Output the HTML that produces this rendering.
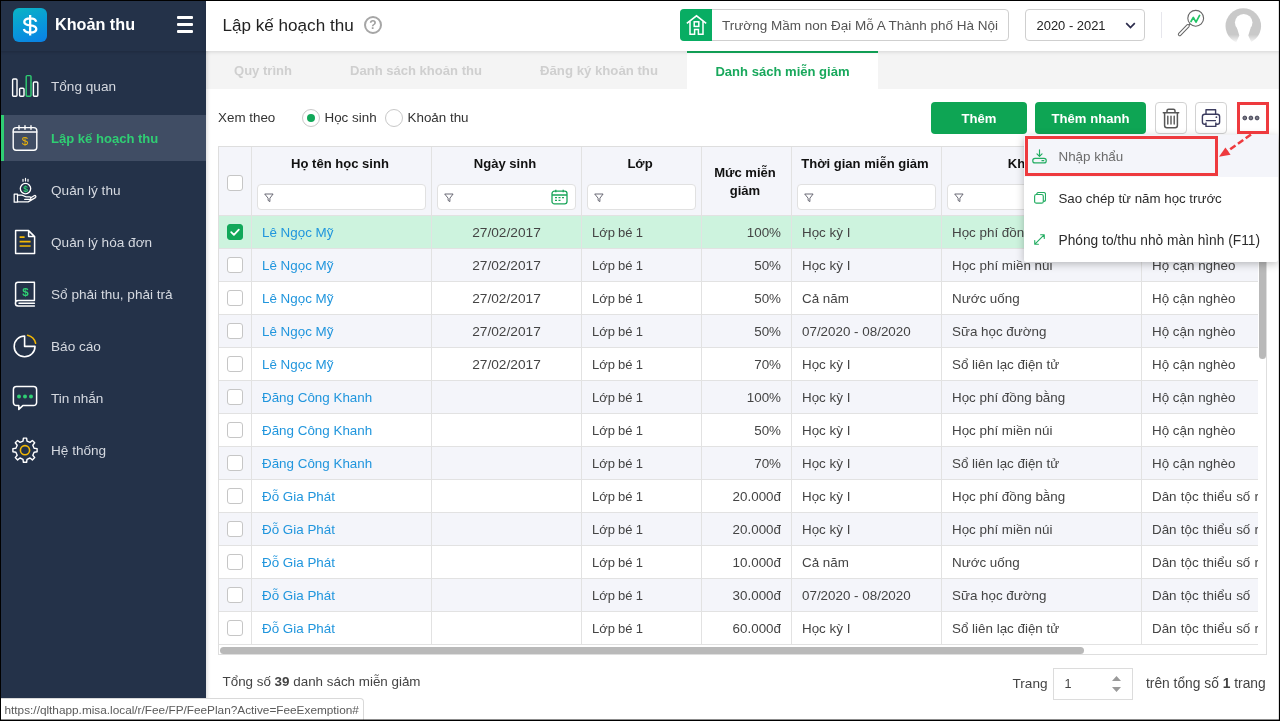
<!DOCTYPE html>
<html lang="vi">
<head>
<meta charset="utf-8">
<title>Lập kế hoạch thu</title>
<style>
*{box-sizing:border-box;margin:0;padding:0}
html,body{width:1280px;height:721px;overflow:hidden;background:#fff}
body{font-family:"Liberation Sans",sans-serif;font-size:13.4px;color:#333;position:relative;will-change:transform}
.abs{position:absolute}
.nw{white-space:nowrap}
/* frame */
#frame{position:absolute;left:0;top:0;width:1280px;height:721px;border-style:solid;border-color:#000;border-width:1px;box-shadow:inset 0 -1px 0 rgba(0,0,0,.45),inset -1px 0 0 rgba(0,0,0,.12);z-index:100;pointer-events:none}
/* sidebar */
#side{position:absolute;left:0;top:0;width:206px;height:721px;background:#243249;box-shadow:1px 0 4px rgba(0,0,0,.16);z-index:4}
#side .hd{position:absolute;left:0;top:0;width:206px;height:51px;box-shadow:0 1px 3px rgba(0,0,0,.18)}
#logo{position:absolute;left:13px;top:8px;width:34px;height:34px;border-radius:6px;background:linear-gradient(160deg,#0bb5c4 0%,#089ad8 50%,#0a7fe6 100%)}
#appname{position:absolute;left:55px;top:14px;font-size:16.2px;font-weight:700;color:#fff;line-height:20px}
#burger{position:absolute;left:177px;top:16px;width:16px;height:17px}
#burger i{position:absolute;left:0;width:16px;height:2.600px;background:#fff;border-radius:1px}
.mi{position:absolute;left:0;width:206px;height:46px;color:#d5d9e0;font-size:13.6px}
.mi span{position:absolute;left:51px;top:15px;line-height:18px;white-space:nowrap}
.mi svg{position:absolute;left:10px;top:8px}
.mi.act{background:#404d64;color:#2fce73;font-weight:700;font-size:13.05px}
.mi.act:before{content:"";position:absolute;left:1px;top:0;width:3px;height:46px;background:#2fce73}
/* top bar */
#top{position:absolute;left:206px;top:0;width:1074px;height:51px;background:#fff;box-shadow:0 1px 4px rgba(0,0,0,.13);z-index:5}
#ptitle{position:absolute;left:16.5px;top:15px;font-size:17.1px;line-height:22px;color:#222;white-space:nowrap}
#help{position:absolute;left:158px;top:16px;width:18px;height:18px;border:2px solid #a6a6a6;border-radius:50%;color:#a0a0a0;font-size:12px;font-weight:700;line-height:14px;text-align:center}
#school{position:absolute;left:474px;top:9px;width:329px;height:32px;border:1px solid #cfcfcf;border-radius:4px;background:#fff}
#school .g{position:absolute;left:-1px;top:-1px;width:31.500px;height:32px;background:#08ad63;border-radius:4px 0 0 4px}
#school .t{position:absolute;left:41px;top:7px;line-height:18px;font-size:13.5px;color:#555;white-space:nowrap}
#year{position:absolute;left:819px;top:9px;width:120px;height:32px;border:1px solid #cfcfcf;border-radius:4px}
#year .t{position:absolute;left:10.5px;top:7px;line-height:18px;font-size:12.95px;color:#222;white-space:nowrap}
#vdiv{position:absolute;left:955px;top:12px;width:1px;height:26px;background:#e6e6ec}
/* tabs */
#tabs{position:absolute;left:206px;top:51px;width:1074px;height:38px;background:#f4f4f4}
.tab{position:absolute;top:0;height:38px;line-height:40px;font-weight:700;font-size:13.05px;color:#cfcfcf;white-space:nowrap}
.tab.on{background:#fff;color:#19a85c;border-top:2px solid #12a85a;line-height:37px;text-align:center}
/* toolbar */
.radio{position:absolute;top:109px;width:18px;height:18px;border:1px solid #c8c8c8;border-radius:50%;background:#fff}
.radio.on:after{content:"";position:absolute;left:4px;top:4px;width:8px;height:8px;border-radius:50%;background:#12a85a}
.btn{position:absolute;top:102px;height:32px;border-radius:4px;background:#0ea554;color:#fff;font-weight:700;font-size:13.1px;line-height:34px;text-align:center}
.ibtn{position:absolute;top:102px;width:32px;height:32px;border:1px solid #d2d2d2;border-radius:4px;background:#fff}
/* grid */
#grid{position:absolute;left:218px;top:146px;width:1049px;height:509px;border:1px solid #dedede;overflow:hidden;background:#fff}
#gin{position:absolute;left:0;top:0;width:1039px;height:499px;overflow:hidden}
table{border-collapse:separate;border-spacing:0;table-layout:fixed;width:1300px}
th,td{border-right:1px solid #e2e2e2;border-bottom:1px solid #e2e2e2;overflow:hidden;white-space:nowrap}
th{background:#f4f5fa;height:69px;font-weight:700;font-size:13.05px;color:#111;vertical-align:top;position:relative}
td{height:33px;padding:0 10px;color:#444;font-size:13.4px}
tr.alt td{background:#f4f5fa}
tr.sel td{background:#cdf3de}
td.c{text-align:center;font-size:13.700px}
td.l{font-size:13px;word-spacing:-.5px}
td.w{word-spacing:.5px}
td.r{text-align:right}
td a{color:#2196dd;text-decoration:none}
.cb{display:block;width:16px;height:16px;border:1px solid #c6c6c6;border-radius:3px;background:#fff;margin:0 auto}
td.k{padding:0}
.cb.on{background:#12a85a;border-color:#12a85a;position:relative}
.ht{position:absolute;left:0;right:3px;top:8px;line-height:18px;text-align:center}
.fi{position:absolute;left:5px;right:5px;top:37px;height:26px;border:1px solid #e1e1e1;border-radius:4px;background:#fff}
.fi svg{position:absolute;left:5.500px;top:7.500px}
/* dropdown */
#menu{position:absolute;left:1024px;top:134.500px;width:253.500px;height:127px;background:#fff;border-radius:2px;box-shadow:0 2px 9px rgba(0,0,0,.26);z-index:20}
#menu .it{position:absolute;left:0;width:253.500px;height:42px;line-height:42px;font-size:13.4px;color:#2b2b2b;white-space:nowrap}
#menu .it span{position:absolute;left:34.500px;top:1px}
#menu .it svg{position:absolute;left:9px;top:12px}
.red{position:absolute;border:3px solid #ee3a3e;z-index:30}
/* footer */
#status{position:absolute;left:0;top:698px;width:364px;height:22px;background:#fff;border:1px solid #d9d9d9;border-left:none;border-bottom:none;border-radius:0 4px 0 0;font-size:11.8px;line-height:22px;color:#5a5a5a;padding-left:4.500px;white-space:nowrap;z-index:50}
</style>
</head>
<body>
<!-- SIDEBAR -->
<div id="side">
  <div class="hd"></div>
  <div id="logo"><svg width="34" height="34" viewBox="0 0 34 34"><path d="M23.200 13.700C22.700 11.400 20.600 10.300 17.200 10.300C13.600 10.300 11.300 11.700 11.300 14C11.300 16.400 13.400 17 17.200 17.400C21 17.800 23.300 18.600 23.300 21C23.300 23.300 20.800 24.600 17.200 24.600C13.600 24.600 11.400 23.400 10.900 21.100M17.150 7V27.500" fill="none" stroke="#fff" stroke-width="2.300"/></svg></div>
  <div id="appname">Khoản thu</div>
  <div id="burger"><i style="top:0"></i><i style="top:7px"></i><i style="top:14px"></i></div>
<svg class="abs" style="left:0;top:0;z-index:2" width="60" height="721" viewBox="0 0 60 721" fill="none" stroke="#fff" stroke-width="1.4" stroke-linejoin="round" stroke-linecap="round">
    <rect x="12.6" y="79" width="4.4" height="17.2" rx="1"/><rect x="19.6" y="88.2" width="4.4" height="8" rx="1"/><rect x="26.2" y="75.6" width="4.8" height="20.6" rx="1" stroke="#2fce73"/><rect x="33.4" y="82" width="4.4" height="14.2" rx="1"/>
    <rect x="13.2" y="127.6" width="23.6" height="22.6" rx="3"/><path d="M13.2 132h23.6M19 125.6v3.6M25 125.6v3.6M31 125.6v3.6"/>
    <text x="25" y="145.200" text-anchor="middle" font-family="Liberation Sans, sans-serif" font-size="11.5" font-weight="400" fill="#f2b705" stroke="none">$</text>
    <circle cx="25.5" cy="188.6" r="5.2" stroke-width="1.3"/><path d="M23 179.3v2M25.5 178.4v2.6M28 179.3v2" stroke-width="1.2"/>
    <text x="25.5" y="191.7" text-anchor="middle" font-family="Liberation Sans, sans-serif" font-size="8.5" font-weight="700" fill="#2fce73" stroke="none">$</text>
    <path d="M14.2 194.2h3.3v8h-3.3zM17.5 195.2h4c2 0 3 1.6 5 1.6h3.2a1.3 1.3 0 0 1 0 2.6h-5M30.5 198l3.600-2.3c1.400-.7 2.500.9 1.3 1.9l-7.2 4.3h-10.7" stroke-width="1.250"/>
    <path d="M15.6 230.6h13l6 6v17h-19zM28.6 230.6v6h6" stroke-width="1.5"/><path d="M19.6 237.2h5M19.6 241.6h11M19.6 246h11" stroke="#f2b705" stroke-width="1.7" stroke-linecap="butt"/>
    <path d="M34.4 300.4h-16.2a2.7 2.7 0 0 0 0 5.6h16.2M19 303.2h15.4M15.6 303.2v-18.6a2.4 2.4 0 0 1 2.400-2.4h16.4v18.2" stroke-width="1.5"/>
    <text x="25.5" y="296" text-anchor="middle" font-family="Liberation Sans, sans-serif" font-size="11.5" font-weight="700" fill="#2fce73" stroke="none">$</text>
    <path d="M24.6 336a10.4 10.4 0 1 0 10.4 10.4h-10.4z" stroke-width="1.6"/><path d="M27.6 335.3a10.6 10.6 0 0 1 8 8" stroke="#f2b705" stroke-width="1.6"/>
    <path d="M16.4 386.6h17.2a3 3 0 0 1 3 3v13a3 3 0 0 1-3 3h-10.8l-4 3.8v-3.8h-2.4a3 3 0 0 1-3-3v-13a3 3 0 0 1 3-3z" stroke-width="1.5"/>
    <circle cx="19" cy="396.4" r="2" fill="#2fce73" stroke="none"/><circle cx="25" cy="396.4" r="2" fill="#2fce73" stroke="none"/><circle cx="31" cy="396.4" r="2" fill="#2fce73" stroke="none"/>
    <path d="M23.0 441.1L23.4 438.1L26.6 438.1L27.0 441.1L30.0 442.4L32.4 440.5L34.7 442.8L32.8 445.2L34.1 448.2L37.1 448.6L37.1 451.8L34.1 452.2L32.8 455.2L34.7 457.6L32.4 459.9L30.0 458.0L27.0 459.3L26.6 462.3L23.4 462.3L23.0 459.3L20.0 458.0L17.6 459.9L15.3 457.6L17.2 455.2L15.9 452.2L12.9 451.8L12.9 448.6L15.9 448.2L17.2 445.2L15.3 442.8L17.6 440.5L20.0 442.4Z" stroke-width="1.4"/>
    <circle cx="25" cy="450.2" r="4.6" stroke="#f2b705" stroke-width="1.6"/>
  </svg>
  <div class="mi" style="top:63px"><span>Tổng quan</span></div>
  <div class="mi act" style="top:115px"><span>Lập kế hoạch thu</span></div>
  <div class="mi" style="top:167px"><span>Quản lý thu</span></div>
  <div class="mi" style="top:219px"><span>Quản lý hóa đơn</span></div>
  <div class="mi" style="top:271px"><span>Sổ phải thu, phải trả</span></div>
  <div class="mi" style="top:323px"><span>Báo cáo</span></div>
  <div class="mi" style="top:375px"><span>Tin nhắn</span></div>
  <div class="mi" style="top:427px"><span>Hệ thống</span></div>
</div>
<!-- TOP BAR -->
<div id="top">
  <div id="ptitle">Lập kế hoạch thu</div>
  <div id="help">?</div>
  <div id="school"><div class="g"><svg width="32" height="32" viewBox="0 0 32 32" fill="none" stroke="#fff" stroke-width="1.5"><path d="M6.800 14.400L16.500 6.800L26.200 14.400M10 12.600V25.200H14.600V20.600H18.400V25.200H23V12.600"/><rect x="14.200" y="12.800" width="4.600" height="4.600"/></svg></div><div class="t">Trường Mầm non Đại Mỗ A Thành phố Hà Nội</div></div>
  <div id="year"><div class="t">2020 - 2021</div><svg class="abs" style="left:98.500px;top:12px" width="11" height="7" viewBox="0 0 11 7" fill="none" stroke="#2b2b4b" stroke-width="1.700"><path d="M1.200 1.200L5.500 5.500L9.800 1.200"/></svg></div>
  <div id="vdiv"></div>
  <svg class="abs" style="left:970px;top:8px" width="32" height="32" viewBox="0 0 32 32" fill="none"><circle cx="19.700" cy="10.300" r="7.900" stroke="#666" stroke-width="1.100" fill="#fff"/><path d="M14.300 15.800L12.600 17.400" stroke="#666" stroke-width="1.300"/><path d="M11.900 17.900L3.700 26.400" stroke="#666" stroke-width="3.700" stroke-linecap="round"/><path d="M11.900 17.900L3.700 26.400" stroke="#fff" stroke-width="1.700" stroke-linecap="round"/><path d="M15 13.500L17.300 9.400L20 14.200L23.600 7.400" stroke="#23c466" stroke-width="1.700" stroke-linejoin="round" stroke-linecap="round"/></svg>
  <svg class="abs" style="left:1019px;top:8px" width="37" height="37" viewBox="0 0 37 37"><defs><linearGradient id="avf" x1="0" y1="0" x2="0" y2="1"><stop offset="0.720" stop-color="#fff" stop-opacity="0"/><stop offset="0.960" stop-color="#fff" stop-opacity="1"/></linearGradient></defs><circle cx="18.300" cy="18" r="17.800" fill="#c9c9c9"/><ellipse cx="18.700" cy="14.600" rx="8.800" ry="8.700" fill="#fff"/><path d="M12 20L14.300 27.500L10 37H27.600L23.300 27.500L25.600 20z" fill="#fff"/><rect x="0" y="0" width="37" height="37" fill="url(#avf)"/></svg>
</div>
<!-- TABS -->
<div id="tabs">
  <div class="tab" style="left:28px">Quy trình</div>
  <div class="tab" style="left:144px">Danh sách khoản thu</div>
  <div class="tab" style="left:334px;font-size:13.200px">Đăng ký khoản thu</div>
  <div class="tab on" style="left:481px;width:191px">Danh sách miễn giảm</div>
</div>
<!-- TOOLBAR -->
<div class="abs nw" style="left:218px;top:109px;line-height:18px;color:#333">Xem theo</div>
<div class="radio on" style="left:302px"></div>
<div class="abs nw" style="left:324.5px;top:109px;line-height:18px;color:#333">Học sinh</div>
<div class="radio" style="left:385px"></div>
<div class="abs nw" style="left:407.5px;top:109px;line-height:18px;color:#333">Khoản thu</div>
<div class="btn" style="left:931px;width:96px">Thêm</div>
<div class="btn" style="left:1035px;width:111px">Thêm nhanh</div>
<div class="ibtn" style="left:1155px"><svg class="abs" style="left:-1px;top:-1px" width="32" height="32" viewBox="0 0 32 32" fill="none" stroke="#565656" stroke-width="1.500" stroke-linecap="round" stroke-linejoin="round"><path d="M8.300 10.800H23.700M12 10.600V8.800a1.600 1.600 0 0 1 1.600-1.600h4.800a1.600 1.600 0 0 1 1.600 1.600v1.800M9.600 11v12.600a2.200 2.200 0 0 0 2.200 2.200h8.400a2.200 2.200 0 0 0 2.200-2.200V11"/><path d="M12.800 14.200v7.800M16 14.200v7.800M19.200 14.200v7.800" stroke-width="1.400"/></svg></div>
<div class="ibtn" style="left:1195px"><svg class="abs" style="left:-1px;top:-1px" width="32" height="32" viewBox="0 0 32 32" fill="none" stroke="#3b3b5e" stroke-width="1.400" stroke-linejoin="round"><path d="M11 12.200V7.800H20.600V12.200M10.800 22.200H9.600a2.200 2.200 0 0 1-2.200-2.200v-5.400a2.400 2.400 0 0 1 2.400-2.400h12.400a2.400 2.400 0 0 1 2.400 2.400v5.400a2.200 2.200 0 0 1-2.200 2.200H21M10.800 18.600H21M11 20.600V24.400H20.800V20.600" /><circle cx="21.400" cy="15.200" r="0.900" fill="#3b3b5e" stroke="none"/></svg></div>
<svg class="abs" style="left:1240px;top:112px" width="24" height="12" viewBox="0 0 24 12"><circle cx="4.800" cy="6" r="1.900" fill="#7a7a86" stroke="#3b3b4e" stroke-width="0.900"/><circle cx="10.900" cy="6" r="1.900" fill="#7a7a86" stroke="#3b3b4e" stroke-width="0.900"/><circle cx="17.100" cy="6" r="1.900" fill="#7a7a86" stroke="#3b3b4e" stroke-width="0.900"/></svg>
<!-- GRID -->
<div id="grid"><div id="gin">
<table>
<colgroup><col style="width:33px"><col style="width:180px"><col style="width:150px"><col style="width:120px"><col style="width:90px"><col style="width:150px"><col style="width:200px"><col style="width:377px"></colgroup>
<tr>
<th><i class="cb" style="margin-top:28px"></i></th>
<th><div class="ht">Họ tên học sinh</div><div class="fi"><svg width="10" height="10" viewBox="0 0 10 10" fill="none" stroke="#5a5a66" stroke-width="0.900" stroke-linejoin="round"><path d="M0.700 1h8.400L5.900 5.200v3.400L4.100 7.400V5.200z"/></svg></div></th>
<th><div class="ht">Ngày sinh</div><div class="fi"><svg width="10" height="10" viewBox="0 0 10 10" fill="none" stroke="#5a5a66" stroke-width="0.900" stroke-linejoin="round"><path d="M0.700 1h8.400L5.900 5.200v3.400L4.100 7.400V5.200z"/></svg><svg style="left:auto;right:7px;top:4px" width="17" height="16" viewBox="0 0 17 16" fill="none" stroke="#1aa55a" stroke-width="1.300" stroke-linejoin="round"><rect x="1" y="2.200" width="15" height="12.600" rx="2.400"/><path d="M1 6h15M4.800 0.800v2.400M12.200 0.800v2.400"/><path d="M4 8.600h2M7.500 8.600h2M11 8.600h2M4 11.400h2M7.500 11.400h2" stroke-width="1.400"/></svg></div></th>
<th><div class="ht">Lớp</div><div class="fi"><svg width="10" height="10" viewBox="0 0 10 10" fill="none" stroke="#5a5a66" stroke-width="0.900" stroke-linejoin="round"><path d="M0.700 1h8.400L5.900 5.200v3.400L4.100 7.400V5.200z"/></svg></div></th>
<th><div class="ht" style="top:16.500px;line-height:18px">Mức miễn<br>giảm</div></th>
<th><div class="ht">Thời gian miễn giảm</div><div class="fi"><svg width="10" height="10" viewBox="0 0 10 10" fill="none" stroke="#5a5a66" stroke-width="0.900" stroke-linejoin="round"><path d="M0.700 1h8.400L5.900 5.200v3.400L4.100 7.400V5.200z"/></svg></div></th>
<th><div class="ht">Khoản thu</div><div class="fi"><svg width="10" height="10" viewBox="0 0 10 10" fill="none" stroke="#5a5a66" stroke-width="0.900" stroke-linejoin="round"><path d="M0.700 1h8.400L5.900 5.200v3.400L4.100 7.400V5.200z"/></svg></div></th>
<th><div class="ht">Đối tượng miễn giảm</div><div class="fi"><svg width="10" height="10" viewBox="0 0 10 10" fill="none" stroke="#5a5a66" stroke-width="0.900" stroke-linejoin="round"><path d="M0.700 1h8.400L5.900 5.200v3.400L4.100 7.400V5.200z"/></svg></div></th>
</tr>
<tr class="sel"><td class="k"><i class="cb on"><svg class="abs" style="left:-1px;top:-1px" width="16" height="16" viewBox="0 0 16 16" fill="none" stroke="#fff" stroke-width="1.800" stroke-linecap="round" stroke-linejoin="round"><path d="M4.200 8.200L6.900 10.800L11.800 5.600"/></svg></i></td><td><a>Lê Ngọc Mỹ</a></td><td class="c">27/02/2017</td><td class="l">Lớp bé 1</td><td class="r">100%</td><td>Học kỳ I</td><td>Học phí đồng bằng</td><td>Hộ cận nghèo</td></tr>
<tr class="alt"><td class="k"><i class="cb"></i></td><td><a>Lê Ngọc Mỹ</a></td><td class="c">27/02/2017</td><td class="l">Lớp bé 1</td><td class="r">50%</td><td>Học kỳ I</td><td>Học phí miền núi</td><td>Hộ cận nghèo</td></tr>
<tr><td class="k"><i class="cb"></i></td><td><a>Lê Ngọc Mỹ</a></td><td class="c">27/02/2017</td><td class="l">Lớp bé 1</td><td class="r">50%</td><td>Cả năm</td><td>Nước uống</td><td>Hộ cận nghèo</td></tr>
<tr class="alt"><td class="k"><i class="cb"></i></td><td><a>Lê Ngọc Mỹ</a></td><td class="c">27/02/2017</td><td class="l">Lớp bé 1</td><td class="r">50%</td><td>07/2020 - 08/2020</td><td>Sữa học đường</td><td>Hộ cận nghèo</td></tr>
<tr><td class="k"><i class="cb"></i></td><td><a>Lê Ngọc Mỹ</a></td><td class="c">27/02/2017</td><td class="l">Lớp bé 1</td><td class="r">70%</td><td>Học kỳ I</td><td>Sổ liên lạc điện tử</td><td>Hộ cận nghèo</td></tr>
<tr class="alt"><td class="k"><i class="cb"></i></td><td><a>Đăng Công Khanh</a></td><td class="c"></td><td class="l">Lớp bé 1</td><td class="r">100%</td><td>Học kỳ I</td><td>Học phí đồng bằng</td><td>Hộ cận nghèo</td></tr>
<tr><td class="k"><i class="cb"></i></td><td><a>Đăng Công Khanh</a></td><td class="c"></td><td class="l">Lớp bé 1</td><td class="r">50%</td><td>Học kỳ I</td><td>Học phí miền núi</td><td>Hộ cận nghèo</td></tr>
<tr class="alt"><td class="k"><i class="cb"></i></td><td><a>Đăng Công Khanh</a></td><td class="c"></td><td class="l">Lớp bé 1</td><td class="r">70%</td><td>Học kỳ I</td><td>Sổ liên lạc điện tử</td><td>Hộ cận nghèo</td></tr>
<tr><td class="k"><i class="cb"></i></td><td><a>Đỗ Gia Phát</a></td><td class="c"></td><td class="l">Lớp bé 1</td><td class="r">20.000đ</td><td>Học kỳ I</td><td>Học phí đồng bằng</td><td class="w">Dân tộc thiểu số rất ít người</td></tr>
<tr class="alt"><td class="k"><i class="cb"></i></td><td><a>Đỗ Gia Phát</a></td><td class="c"></td><td class="l">Lớp bé 1</td><td class="r">20.000đ</td><td>Học kỳ I</td><td>Học phí miền núi</td><td class="w">Dân tộc thiểu số rất ít người</td></tr>
<tr><td class="k"><i class="cb"></i></td><td><a>Đỗ Gia Phát</a></td><td class="c"></td><td class="l">Lớp bé 1</td><td class="r">10.000đ</td><td>Cả năm</td><td>Nước uống</td><td class="w">Dân tộc thiểu số rất ít người</td></tr>
<tr class="alt"><td class="k"><i class="cb"></i></td><td><a>Đỗ Gia Phát</a></td><td class="c"></td><td class="l">Lớp bé 1</td><td class="r">30.000đ</td><td>07/2020 - 08/2020</td><td>Sữa học đường</td><td class="w">Dân tộc thiểu số</td></tr>
<tr><td class="k"><i class="cb"></i></td><td><a>Đỗ Gia Phát</a></td><td class="c"></td><td class="l">Lớp bé 1</td><td class="r">60.000đ</td><td>Học kỳ I</td><td>Sổ liên lạc điện tử</td><td class="w">Dân tộc thiểu số rất ít người</td></tr>
</table>
</div>
<div class="abs" style="left:1px;top:500px;width:864px;height:7px;border-radius:4px;background:#b9b9b9"></div>
<div class="abs" style="left:1039.500px;top:0;width:7.500px;height:212px;border-radius:0 0 4px 4px;background:#b9b9b9"></div>
</div>
<!-- DROPDOWN -->
<div id="menu">
  <div class="it" style="top:.500px;background:#f4f5fa;color:#6b6b6b;box-shadow:0 -.500px 0 #f4f5fa"><svg width="15" height="15" viewBox="0 0 16 16" fill="none" stroke="#23ad62" stroke-width="1.250" stroke-linecap="round" stroke-linejoin="round" style="left:8.400px;top:13.600px"><path d="M8 0.800v6.800M5.300 5.200L8 7.900L10.700 5.200"/><rect x="0.800" y="10" width="14.400" height="4.800" rx="2.400"/><path d="M10.600 12.400h2"/></svg><span>Nhập khẩu</span></div>
  <div class="it" style="top:42.500px"><svg width="12.400" height="12.400" viewBox="0 0 14 14" fill="none" stroke="#23ad62" stroke-width="1.300" stroke-linejoin="round" style="left:9.800px;top:15.400px"><rect x="0.700" y="2.800" width="9.800" height="9.800" rx="2"/><path d="M3 2.800V2.600a2 2 0 0 1 2-2h6a2 2 0 0 1 2 2v6a2 2 0 0 1-2 2h-.4"/></svg><span style="font-size:13.300px">Sao chép từ năm học trước</span></div>
  <div class="it" style="top:84.500px"><svg width="11" height="11" viewBox="0 0 12 12" fill="none" stroke="#23ad62" stroke-width="1.200" stroke-linecap="round" stroke-linejoin="round" style="left:10px;top:14.500px"><path d="M1 11L11 1M7.200 0.800H11.200V4.800M0.800 7.200V11.200H4.800"/></svg><span style="font-size:13.750px">Phóng to/thu nhỏ màn hình (F11)</span></div>
</div>
<div class="red" style="left:1025px;top:136px;width:193px;height:40px"></div>
<div class="red" style="left:1237px;top:102px;width:32px;height:32px"></div>
<svg class="abs" style="left:1214px;top:130px;z-index:31" width="44" height="32" viewBox="0 0 44 32" fill="none"><path d="M37 4.500L13 21.500" stroke="#ee3a3e" stroke-width="2.600" stroke-dasharray="6.500 3"/><path d="M5 26.800L16.600 24.800L11.400 17.400z" fill="#ee3a3e"/></svg>
<!-- FOOTER -->
<div class="abs nw" style="left:222.5px;top:673px;line-height:18px;color:#444">Tổng số <b>39</b> danh sách miễn giảm</div>
<div class="abs nw" style="left:1012.5px;top:675px;line-height:18px;color:#444;font-size:13.600px">Trang</div>
<div class="abs" style="left:1053px;top:668px;width:80px;height:32px;border:1px solid #dcdcdc;background:#fff"><span class="abs" style="left:10.500px;top:5.500px;line-height:18px;color:#444;font-size:12.600px">1</span><svg class="abs" style="left:57px;top:6px" width="11" height="18" viewBox="0 0 11 18" fill="#9a9a9a"><path d="M5.500 1L10 6H1zM5.500 17L10 12H1z"/></svg></div>
<div class="abs nw" style="left:1146px;top:675px;line-height:18px;color:#444;font-size:13.800px">trên tổng số <b>1</b> trang</div>
<div id="status">https://qlthapp.misa.local/r/Fee/FP/FeePlan?Active=FeeExemption#</div>
<div id="frame"></div>
</body>
</html>
